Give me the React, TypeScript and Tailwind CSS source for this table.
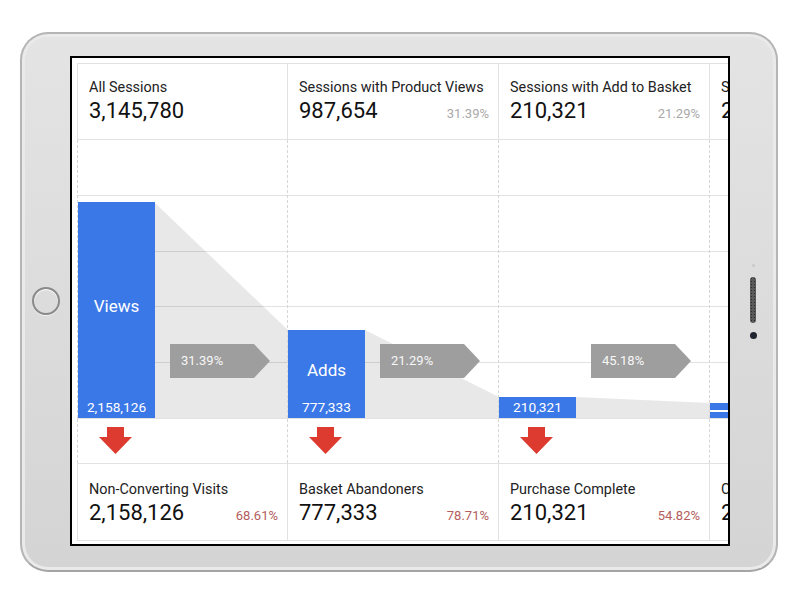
const header = [
  { title: 'All Sessions', value: '3,145,780', pct: '' },
  { title: 'Sessions with Product Views', value: '987,654', pct: '31.39%' },
  { title: 'Sessions with Add to Basket', value: '210,321', pct: '21.29%' },
  { title: 'Sessions with Transactions', value: '210,321', pct: '100%' },
];

const footer = [
  { title: 'Non-Converting Visits', value: '2,158,126', pct: '68.61%' },
  { title: 'Basket Abandoners', value: '777,333', pct: '78.71%' },
  { title: 'Purchase Complete', value: '210,321', pct: '54.82%' },
  { title: 'Completed Orders', value: '210,321', pct: '0%' },
];

const bars = [
  { label: 'Views', value: '2,158,126', h: 216, badge: '31.39%' },
  { label: 'Adds', value: '777,333', h: 88, badge: '21.29%' },
  { label: '', value: '210,321', h: 21, badge: '45.18%' },
  { label: '', value: '', h: 15, badge: '' },
];

const widths = ['w-[210px]', 'w-[211px]', 'w-[211px]', 'w-[211px]'];

function RedArrow() {
  return (
    <svg width="33" height="27" viewBox="0 0 33 27">
      <polygon points="8,0 25,0 25,10 33,10 16.5,27 0,10 8,10" fill="#dd3b30" />
    </svg>
  );
}

function Stat({ title, value, pct, pctColor }: { title: string; value: string; pct: string; pctColor: string }) {
  return (
    <div className="flex flex-col pl-[11px] pr-[9px]">
      <div className="text-[14.4px] leading-[20px] text-[#222] whitespace-nowrap">{title}</div>
      <div className="flex items-baseline justify-between">
        <span className="text-[22px] leading-[26px] text-[#111]">{value}</span>
        <span className={`text-[13px] ${pctColor}`}>{pct}</span>
      </div>
    </div>
  );
}

export default function App() {
  return (
    <div className="w-[800px] h-[600px] bg-white pt-[32px] pl-[20px] font-['Roboto',sans-serif]">
      {/* tablet body */}
      <div className="w-[758px] h-[540px] rounded-[28px] border-2 border-[#b5b5b5] border-b-[#a4a4a4] bg-gradient-to-b from-[#e4e4e4] to-[#d4d4d4] shadow-[inset_0_0_0_3px_#eaeaea] flex pt-[22px]">
        {/* left bezel */}
        <div className="w-[48px] h-[490px] flex items-center justify-center">
          <div className="w-[28px] h-[28px] rounded-full border-2 border-[#8a8a8a] shadow-[inset_0_1px_1px_#fff,0_1px_0_#f2f2f2]" />
        </div>

        {/* screen */}
        <div className="w-[660px] h-[490px] border-2 border-black bg-white overflow-hidden pt-[5px] pl-[5px]">
          <div className="w-[843px]">
            {/* header cards */}
            <div className="flex border-t border-b border-[#e2e2e2] h-[77px]">
              {header.map((c, i) => (
                <div key={i} className={`${widths[i]} border-l border-[#e2e2e2] pt-[14px]`}>
                  <Stat {...c} pctColor="text-[#a9a9a9]" />
                </div>
              ))}
            </div>

            {/* funnel chart */}
            <div className="grid h-[279px]">
              <div className="col-start-1 row-start-1 flex flex-col">
                {[0, 1, 2, 3, 4].map((n) => (
                  <div key={n} className="flex-1 border-b border-[#e2e2e2]" />
                ))}
              </div>
              <svg className="col-start-1 row-start-1" width="843" height="278" viewBox="0 0 843 278">
                <g fill="#000" fillOpacity="0.09">
                  <polygon points="78,63 211,190 211,278 78,278" />
                  <polygon points="288,190 422,257 422,278 288,278" />
                  <polygon points="499,257 633,263 633,278 499,278" />
                </g>
              </svg>
              <div className="col-start-1 row-start-1 flex h-[278px]">
                {bars.map((b, i) => (
                  <div key={i} className={`${widths[i]} border-l border-dashed border-[#d6d6d6] flex items-start`}>
                    <div
                      className="w-[77px] self-end bg-[#3b78e7] grid text-white"
                      style={{ height: b.h }}
                    >
                      {b.label && (
                        <span className="col-start-1 row-start-1 self-center text-center text-[17px] mb-[6px]">{b.label}</span>
                      )}
                      {b.value && (
                        <span className="col-start-1 row-start-1 self-end text-center text-[13.7px] leading-[16px] mb-[3px]">{b.value}</span>
                      )}
                      {!b.value && <span className="col-start-1 row-start-1 self-center h-[2px] bg-white" />}
                    </div>
                    {b.badge && (
                      <div className="mt-[204px] ml-[15px] w-[100px] h-[34px] bg-[#9e9e9e] [clip-path:polygon(0_0,84%_0,100%_50%,84%_100%,0_100%)] flex items-center pl-[11px] text-[13px] text-[#f7f7f7]">
                        {b.badge}
                      </div>
                    )}
                  </div>
                ))}
              </div>
            </div>

            {/* drop-off arrows */}
            <div className="flex h-[45px] border-b border-[#e2e2e2]">
              {bars.map((b, i) => (
                <div key={i} className={`${widths[i]} border-l border-dashed border-[#d6d6d6] pt-[8px] pl-[21px]`}>
                  {i < 3 && <RedArrow />}
                </div>
              ))}
            </div>

            {/* drop-off cards */}
            <div className="flex h-[77px] border-b border-[#e2e2e2]">
              {footer.map((c, i) => (
                <div key={i} className={`${widths[i]} border-l border-[#e2e2e2] pt-[16px]`}>
                  <Stat {...c} pctColor="text-[#b35d5d]" />
                </div>
              ))}
            </div>
          </div>
        </div>

        {/* right bezel */}
        <div className="w-[46px] h-[490px] flex flex-col items-center justify-center">
          <div className="w-[3px] h-[3px] rounded-full bg-[#c8c8c8]" />
          <div className="mt-[10px] w-[6px] h-[46px] rounded-full bg-[#5a5a5a] bg-[radial-gradient(#2a2a2a_1px,transparent_1px)] bg-[length:3px_3px]" />
          <div className="mt-[9px] w-[7px] h-[7px] rounded-full bg-[#1f2430]" />
        </div>
      </div>
    </div>
  );
}
